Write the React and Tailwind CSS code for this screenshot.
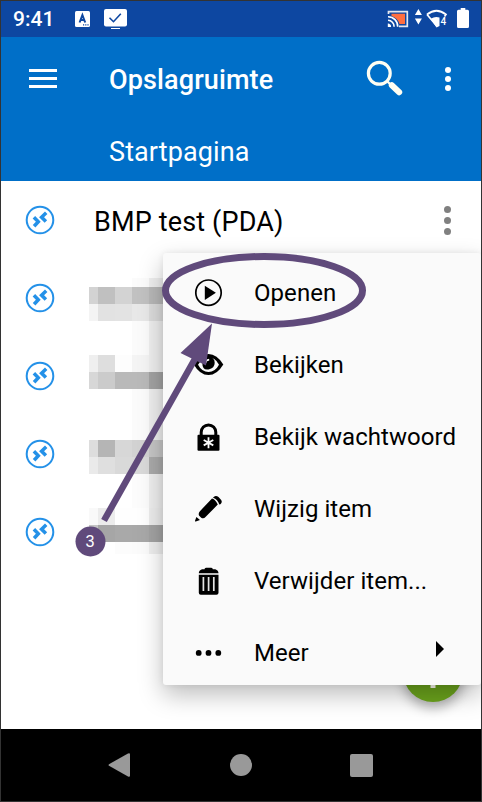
const REMOTE_ROWS = [0, 1, 2, 3];

// Column widths are 9/17/17/17/14; one entry per band of the censored names.
const MOSAIC = [
  { h: 'h-[9px]', c: ['', '', '', 'bg-[#fbfbfb]', 'bg-[#efefef]'] },
  { h: 'h-[17px]', c: ['bg-[#d3d3d3]', 'bg-[#c0c0c0]', 'bg-[#d3d3d3]', 'bg-[#c1c1c1]', 'bg-[#b8b8b8]'] },
  { h: 'h-[17px]', c: ['bg-[#f4f4f4]', 'bg-[#e2e2e2]', 'bg-[#e3e3e3]', 'bg-[#e8e8e8]', 'bg-[#dcdcdc]'] },
  { h: 'h-[34px]', c: ['', '', '', 'bg-[#fbfbfb]', 'bg-[#efefef]'] },
  { h: 'h-[17px]', c: ['bg-[#efefef]', 'bg-[#dedede]', 'bg-[#fdfdfd]', 'bg-[#f4f4f4]', 'bg-[#efefef]'] },
  { h: 'h-[17px]', c: ['bg-[#d7d7d7]', 'bg-[#cbcbcb]', 'bg-[#b9b9b9]', 'bg-[#b9b9b9]', 'bg-[#a3a3a3]'] },
  { h: 'h-[51px]', c: ['', '', '', 'bg-[#fbfbfb]', 'bg-[#efefef]'] },
  { h: 'h-[17px]', c: ['bg-[#dddddd]', 'bg-[#b5b5b5]', 'bg-[#d7d7d7]', 'bg-[#d2d2d2]', 'bg-[#c6c6c6]'] },
  { h: 'h-[17px]', c: ['bg-[#eaeaea]', 'bg-[#dfdfdf]', 'bg-[#d9d9d9]', 'bg-[#d9d9d9]', 'bg-[#aaaaaa]'] },
  { h: 'h-[34px]', c: ['', '', '', 'bg-[#fcfcfc]', 'bg-[#efefef]'] },
  { h: 'h-[17px]', c: ['bg-[#f9f9f9]', 'bg-[#ececec]', 'bg-[#fefefe]', 'bg-[#fefefe]', 'bg-[#ededed]'] },
  { h: 'h-[17px]', c: ['bg-[#c4c4c4]', 'bg-[#a6a6a6]', 'bg-[#a9a9a9]', 'bg-[#a8a8a8]', 'bg-[#a3a3a3]'] },
  { h: 'h-[12px]', c: ['', '', 'bg-[#fcfcfc]', 'bg-[#fbfbfb]', 'bg-[#efefef]'] },
];

function RemoteIcon() {
  return (
    <svg className="h-[30px] w-[30px] shrink-0" viewBox="0 0 30 30" fill="none" stroke="#2491e8">
      <circle cx="15" cy="15" r="13.3" strokeWidth="2" />
      <path d="M8.900 12.200 13.300 16.700 9.100 21.300M21.200 7.800 16.600 12.200 20.900 16.500" strokeWidth="3.500" />
    </svg>
  );
}

function StatusBar() {
  return (
    <div className="flex h-9 items-center bg-[#0d47a1] pl-3 text-white">
      <span className="w-[62px] text-[21px] leading-none font-medium">9:41</span>
      <svg className="h-4 w-4" viewBox="0 0 16 16">
        <rect x="0" y="0" width="15" height="16" rx="1.5" fill="#fff" />
        <path d="M4.600 11.500 7.400 4 10.200 11.500M5.700 9h3.500" fill="none" stroke="#0d47a1" strokeWidth="2" />
        <path d="M8 13.2h1.2v1.3H8zM10.2 13.2h1.2v1.3h-1.2zM12.4 13.2h1.2v1.3h-1.2z" fill="#0d47a1" />
      </svg>
      <svg className="ml-[13px] h-[22px] w-[24px]" viewBox="0 0 24 22">
        <rect x="0" y="1" width="23" height="17.5" rx="2" fill="#fff" />
        <path d="M7 20h9v1H7z" fill="#fff" />
        <path d="m5.5 9.7 4 4 7.3-8" fill="none" stroke="#0d47a1" strokeWidth="1.6" />
      </svg>
      <svg className="ml-auto h-6 w-[94px]" viewBox="387 7 94 24">
        <path d="M388.5 14v-2.3h18.8v14.6H399" fill="none" stroke="#e5e8ef" strokeWidth="1.7" />
        <path d="M391.5 13.7h13.5V24h-5.5c-1-4-4-6.5-8-8z" fill="#ff6e40" />
        <path d="M388 16.7a9.6 9.6 0 0 1 9.7 10M388 20.3a6.2 6.2 0 0 1 6.1 6.4" fill="none" stroke="#fff" strokeWidth="1.6" />
        <path d="M387.8 23.6a3.1 3.1 0 0 1 3.3 3.3h-3.3z" fill="#fff" />
        <path d="m418.400 9 3.500 6h-7zM418.400 24.500l-3.500-6h7z" fill="#fff" />
        <path d="M427 14.500q9.500-7.500 19 0l-1.500 2M427 14.500l9.500 11.300" fill="none" stroke="#fff" strokeWidth="1.700" />
        <path d="M430.800 18.800q4.500-3 8.700-1.200v8.400l-3 1.600z" fill="#fff" />
        <text x="440.500" y="24.600" fontSize="10" fontWeight="500" fill="#fff">4</text>
        <path d="M458.500 9.800h2.200V8h4.600v1.800h2.200q1.500 0 1.500 1.500v15.200q0 1.500-1.500 1.500h-9q-1.500 0-1.500-1.500V11.300q0-1.500 1.500-1.500z" fill="#fff" />
      </svg>
    </div>
  );
}

function AppHeader() {
  return (
    <header className="h-36 bg-[#006fc8] text-white">
      <div className="flex h-[83px] items-center pl-7">
        <div className="flex w-7 flex-col gap-[5px]">
          <i className="h-[3px] bg-white" />
          <i className="h-[3px] bg-white" />
          <i className="h-[3px] bg-white" />
        </div>
        <h1 className="ml-[52px] pt-[4px] text-[27px] leading-none font-medium tracking-[0.12px]">Opslagruimte</h1>
        <svg className="mr-[42px] ml-auto h-[37px] w-[37px]" viewBox="0 0 37 37" fill="none" stroke="#fffef2">
          <circle cx="13.300" cy="13.300" r="10.900" strokeWidth="3.200" />
          <path d="m25.800 25.300 7.400 7" strokeWidth="6" strokeLinecap="round" />
          <path d="m20.500 20.500 3.500 3.500" strokeWidth="2.400" />
        </svg>
        <div className="mr-[30px] flex w-[6px] flex-col gap-[3px]">
          <i className="h-[6px] rounded-full bg-white" />
          <i className="h-[6px] rounded-full bg-white" />
          <i className="h-[6px] rounded-full bg-white" />
        </div>
      </div>
      <div className="flex h-[61px] items-center pt-[3px] pl-[108px] text-[27px] leading-none tracking-[0.1px]">Startpagina</div>
    </header>
  );
}

const menuIcon = 'h-8 w-8 shrink-0';
const menuBox = '-0.5 0.3 32 32';

function PlayIcon() {
  return (
    <svg className={menuIcon} viewBox={menuBox}>
      <circle cx="16" cy="16" r="12.7" fill="none" stroke="#000" strokeWidth="1.7" />
      <path d="M12.3 9v14.2L23.4 16z" />
    </svg>
  );
}

function EyeIcon() {
  return (
    <svg className={menuIcon} viewBox={menuBox}>
      <path d="M1.200 15.800Q7.500 5.200 16 5.200t14.800 10.600Q24.500 26.400 16 26.400T1.200 15.800z" />
      <path d="M5.500 16q2-4 5.500-6h10.400q3.200 2 5.100 6-4 7.300-10.500 7.300T5.500 16z" fill="#fafafa" />
      <path d="M9.800 14q0-5.500 6.200-5.500t6.200 5.500-6.200 6.700T9.800 14z" />
      <path d="M12.700 14.500q.4-3.300 4-3.600" fill="none" stroke="#fafafa" strokeWidth="1.900" />
    </svg>
  );
}

function LockIcon() {
  return (
    <svg className={menuIcon} viewBox={menuBox}>
      <path d="M8.700 16v-4.500a7.300 7.300 0 0 1 14.600 0V16" fill="none" stroke="#000" strokeWidth="3" />
      <rect x="5" y="14" width="22" height="16" rx="1" />
      <path d="M16 16.500v11M11.200 19.300l9.600 5.400M20.800 19.300l-9.600 5.400" stroke="#fafafa" strokeWidth="1.800" />
    </svg>
  );
}

function PencilIcon() {
  return (
    <svg className={menuIcon} viewBox={menuBox}>
      <path d="M19.500 5.800q3 .4 5.800 6.100L13 24.300q-1.800 2-4.300.7l-2-2q-1.200-2.200.5-4.300zM21.200 4.200q2.300-2 4.800.1l2.500 2.700q1.800 2.300-.6 4.500l-1.100.3q-1.500-5.200-6.300-6.800zM3.900 24.400l3.600 3-4.200 1.400q-1 .1-.7-.9z" />
    </svg>
  );
}

function TrashIcon() {
  return (
    <svg className={menuIcon} viewBox={menuBox}>
      <path d="M12 4.500q0-1.500 1.500-1.500h5.300q1.500 0 1.500 1.500h2.500Q26 5.500 26 8.500H6.300q0-3 3.200-4zM6.300 10H26v18q0 2-2 2H8.300q-2 0-2-2z" />
      <path d="M10.900 12.300v14M16.100 12.300v14M21.300 12.300v14" stroke="#e4e4e4" strokeWidth="1.700" />
    </svg>
  );
}

function MoreIcon() {
  return (
    <svg className={menuIcon} viewBox={menuBox}>
      <circle cx="6.200" cy="16.200" r="2.900" />
      <circle cx="16" cy="16.200" r="2.900" />
      <circle cx="25.800" cy="16.200" r="2.900" />
    </svg>
  );
}

const MENU = [
  ['Openen', PlayIcon],
  ['Bekijken', EyeIcon],
  ['Bekijk wachtwoord', LockIcon],
  ['Wijzig item', PencilIcon],
  ['Verwijder item...', TrashIcon],
  ['Meer', MoreIcon],
];

function ContextMenu() {
  return (
    <div className="absolute top-[252px] left-[162px] z-10 w-[318px] rounded-[3px] bg-[#fafafa] shadow-[0_10px_24px_rgba(0,0,0,0.26),0_0_6px_rgba(0,0,0,0.07)]">
      {MENU.map(([label, Icon]) => (
        <div key={label} className="flex h-[72px] items-center pt-[7px] pl-[29px]">
          <Icon />
          <span className="ml-[30px] text-[24px] leading-none tracking-[0.06px]">{label}</span>
          {label === 'Meer' && (
            <svg className="mr-[37px] mb-[7px] ml-auto h-4 w-2" viewBox="0 0 8 16">
              <path d="M0 0v16L8 8z" />
            </svg>
          )}
        </div>
      ))}
    </div>
  );
}

function Annotation() {
  return (
    <svg className="absolute -top-px -left-px z-20 h-[802px] w-[482px]" viewBox="0 0 482 802">
      <ellipse cx="264" cy="290.500" rx="98.500" ry="34" fill="none" stroke="#604a7b" strokeWidth="7" />
      <path d="M104 520.500 196 357" stroke="#604a7b" strokeWidth="6.500" />
      <path d="M212 323.500 180.500 353 206 365.500z" fill="#604a7b" />
      <circle cx="90.500" cy="541.500" r="15" fill="#604a7b" />
      <text x="90" y="547.200" textAnchor="middle" fontSize="16" fill="#fff" className="font-['Liberation_Sans',Arial,sans-serif]">3</text>
    </svg>
  );
}

export default function App() {
  return (
    <div className="relative flex h-[802px] w-[482px] flex-col overflow-hidden border border-[#333333] bg-white font-['Roboto',sans-serif] text-black">
      <StatusBar />
      <AppHeader />
      <main className="relative flex-1 overflow-hidden">
        <div className="flex h-[78px] items-center pl-6">
          <RemoteIcon />
          <span className="ml-[39px] pt-[4px] text-[27px] leading-none tracking-[0.15px]">BMP test (PDA)</span>
          <div className="mr-[30px] ml-auto flex w-[7px] flex-col gap-[4px]">
            <i className="h-[7px] rounded-full bg-[#808080]" />
            <i className="h-[7px] rounded-full bg-[#808080]" />
            <i className="h-[7px] rounded-full bg-[#808080]" />
          </div>
        </div>
        <div className="flex">
          <div className="pl-6">
            {REMOTE_ROWS.map((row) => (
              <div key={row} className="flex h-[78px] items-center">
                <RemoteIcon />
              </div>
            ))}
          </div>
          <div className="ml-[34px] pt-[19px]">
            {MOSAIC.map((band, i) => (
              <div key={i} className={`grid grid-cols-[9px_17px_17px_17px_14px] ${band.h}`}>
                {band.c.map((color, j) => (
                  <i key={j} className={color} />
                ))}
              </div>
            ))}
          </div>
        </div>
        <button className="absolute right-[18px] bottom-[27px] flex h-[60px] w-[60px] items-center justify-center rounded-full bg-[#6ba31c] shadow-[0_6px_12px_rgba(0,0,0,0.3)]">
          <svg className="h-8 w-8" viewBox="0 0 32 32">
            <path d="M16 0v32M0 16h32" stroke="#fffef2" strokeWidth="5" />
          </svg>
        </button>
      </main>
      <nav className="flex h-[72px] shrink-0 items-center bg-black">
        <svg className="ml-[107px] h-6 w-[23px]" viewBox="0 0 23 24" fill="#999999">
          <path d="M1 11.200 20 .4q2-.8 2 .9v21.400q0 1.700-2 .9L1 12.800q-1-.8 0-1.600z" />
        </svg>
        <span className="ml-[99px] h-[22px] w-[22px] rounded-full bg-[#999999]" />
        <span className="ml-[98px] h-[23px] w-[23px] rounded-[2px] bg-[#999999]" />
      </nav>
      <ContextMenu />
      <Annotation />
    </div>
  );
}
